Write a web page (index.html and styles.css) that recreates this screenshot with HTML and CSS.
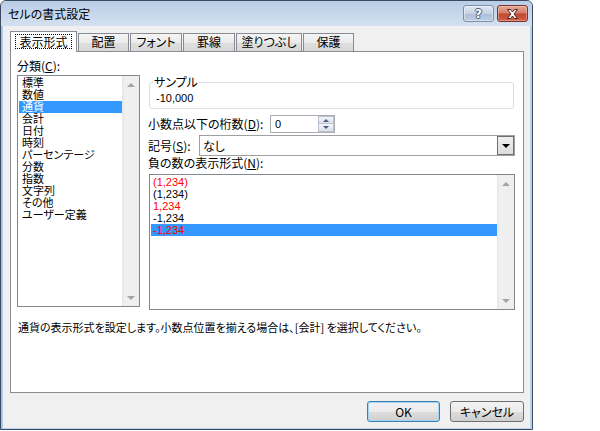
FILE: index.html
```html
<!DOCTYPE html>
<html lang="ja">
<head>
<meta charset="utf-8">
<title>セルの書式設定</title>
<link rel="stylesheet" href="styles.css">
</head>
<body>
<div class="window">
  <div class="titlebar">
    <span class="title">セルの書式設定</span>
    <div class="caption-btns">
      <span class="cbtn help"><span class="q">?</span></span>
      <span class="cbtn close">
        <svg width="13" height="10" viewBox="0 0 13 10"><path d="M1.5 0.5 H4.5 L6.5 3 L8.5 0.5 H11.5 L8 5 L11.5 9.5 H8.5 L6.5 7 L4.5 9.5 H1.5 L5 5 Z" fill="#fff" stroke="#4a2a24" stroke-width="1" stroke-linejoin="round"/></svg>
      </span>
    </div>
  </div>
  <div class="frame">
    <div class="client">
      <div class="tabs">
        <div class="tab active"><span class="focus">表示形式</span></div>
        <div class="tab w51">配置</div>
        <div class="tab w52">フォント</div>
        <div class="tab w52">罫線</div>
        <div class="tab w66">塗りつぶし</div>
        <div class="tab w51">保護</div>
      </div>
      <div class="panel">
        <div class="top">
          <div class="left-col">
            <div class="lbl cat-label">分類(<u>C</u>):</div>
            <div class="listbox cat-list">
              <div class="items">
                <div class="item">標準</div>
                <div class="item">数値</div>
                <div class="item sel">通貨</div>
                <div class="item">会計</div>
                <div class="item">日付</div>
                <div class="item">時刻</div>
                <div class="item">パーセンテージ</div>
                <div class="item">分数</div>
                <div class="item">指数</div>
                <div class="item">文字列</div>
                <div class="item">その他</div>
                <div class="item">ユーザー定義</div>
              </div>
              <div class="scrollbar">
                <span class="sarrow"><span class="tri-up"></span></span>
                <span class="sarrow"><span class="tri-down"></span></span>
              </div>
            </div>
          </div>
          <div class="right-col">
            <div class="group">
              <span class="legend">サンプル</span>
              <div class="sample">-10,000</div>
            </div>
            <div class="row dec-row">
              <span class="lbl dec-label">小数点以下の桁数(<u>D</u>):</span>
              <div class="spin">
                <span class="spin-val">0</span>
                <span class="spin-btns">
                  <span class="sb"><span class="stri-up"></span></span>
                  <span class="sb"><span class="stri-down"></span></span>
                </span>
              </div>
            </div>
            <div class="row sym-row">
              <span class="lbl sym-label">記号(<u>S</u>):</span>
              <div class="combo">
                <span class="combo-val">なし</span>
                <span class="combo-btn"><span class="ctri"></span></span>
              </div>
            </div>
            <div class="lbl neg-label">負の数の表示形式(<u>N</u>):</div>
            <div class="listbox neg-list">
              <div class="items">
                <div class="item red">(1,234)</div>
                <div class="item">(1,234)</div>
                <div class="item red">1,234</div>
                <div class="item">-1,234</div>
                <div class="item sel red">-1,234</div>
              </div>
              <div class="scrollbar">
                <span class="sarrow"><span class="tri-up"></span></span>
                <span class="sarrow"><span class="tri-down"></span></span>
              </div>
            </div>
          </div>
        </div>
        <p class="desc">通貨の表示形式を設定します。小数点位置を揃える場合は、[会計] を選択してください。</p>
      </div>
      <div class="buttons">
        <button class="btn ok">OK</button>
        <button class="btn cancel">キャンセル</button>
      </div>
    </div>
  </div>
</div>
</body>
</html>
```
FILE: styles.css
```css
* { box-sizing: border-box; }
html, body { margin: 0; padding: 0; }
body {
  width: 600px;
  height: 431px;
  overflow: hidden;
  background: #fff;
  font-family: "Noto Sans CJK JP", "Noto Sans", sans-serif;
  font-size: 12px;
  color: #000;
  font-feature-settings: "palt";
}
.window {
  width: 533px;
  height: 430px;
  border: 1px solid #3b4a5c;
  border-radius: 6px 6px 0 0;
  display: flex;
  flex-direction: column;
  background: #a9cbec;
  overflow: hidden;
}
.titlebar {
  height: 25px;
  flex: none;
  display: flex;
  align-items: flex-start;
  padding: 0 4px 0 7px;
  background: linear-gradient(#b8cde7, #d4e1f1);
}
.title {
  line-height: 14px;
  margin-top: 6px;
  font-size: 12px;
  color: #000;
}
.caption-btns {
  margin-left: auto;
  margin-top: 4px;
  display: flex;
  gap: 3px;
}
.cbtn {
  width: 31px;
  height: 17px;
  border-radius: 3px;
  display: flex;
  align-items: center;
  justify-content: center;
}
.help {
  border: 1px solid #7d8ea6;
  background: linear-gradient(#dfe8f3, #c3d2e5 50%, #aebfd8 51%, #bccce2);
  box-shadow: inset 0 0 0 1px rgba(255,255,255,0.45);
}
.q {
  font-family: "DejaVu Sans", sans-serif;
  font-weight: bold;
  font-size: 12px;
  line-height: 12px;
  color: #fff;
  text-shadow: 1px 0 #4d5a6e, -1px 0 #4d5a6e, 0 1px #4d5a6e, 0 -1px #4d5a6e;
}
.close {
  border: 1px solid #7a3328;
  background: linear-gradient(#e6a898, #d57966 48%, #c2482f 52%, #cf5e42);
  box-shadow: inset 0 0 0 1px rgba(255,220,210,0.4);
}
.close svg { display: block; }
.frame {
  flex: 1;
  display: flex;
  padding: 0 2px 1px 2px;
  background: linear-gradient(to right, #8fbde8, #b7d3ee 2px);
}
.client {
  flex: 1;
  display: flex;
  flex-direction: column;
  background: #f0f0f0;
  padding: 5px 6px 6px 7px;
}
.tabs {
  height: 20px;
  flex: none;
  display: flex;
  align-items: flex-end;
}
.tab {
  height: 18px;
  margin-left: 1px;
  border: 1px solid #898c95;
  border-bottom: none;
  background: linear-gradient(#f4f4f4, #ebebeb 50%, #dfdfdf 51%, #d8d8d8);
  text-align: center;
  line-height: 16px;
  white-space: nowrap;
}
.w51 { width: 51px; }
.w52 { width: 52px; }
.w66 { width: 66px; }
.tab.active {
  width: 67px;
  height: 21px;
  margin-left: 0;
  margin-bottom: -1px;
  background: #fff;
  position: relative;
  z-index: 1;
  padding-top: 2px;
}
.focus {
  display: inline-block;
  border: 1px dotted #000;
  padding: 0 3px;
  line-height: 13px;
}
.panel {
  height: 342px;
  flex: none;
  border: 1px solid #898c95;
  background: #fff;
  padding: 0 0 0 6px;
  display: flex;
  flex-direction: column;
}
.top {
  display: flex;
  align-items: flex-start;
}
.left-col { width: 123px; flex: none; }
.lbl { line-height: 14px; white-space: nowrap; }
.cat-label { margin-top: 7px; }
.listbox {
  border: 1px solid #828790;
  background: #fff;
  display: flex;
}
.cat-list { margin-top: 2px; height: 232px; }
.items {
  flex: 1;
  padding-top: 1px;
  min-width: 0;
  font-family: "Liberation Sans", "Noto Sans CJK JP", sans-serif;
  font-size: 11px;
}
.item {
  height: 12px;
  line-height: 12px;
  margin-left: 1px;
  padding-left: 2px;
  white-space: nowrap;
}
.cat-list .item { padding-left: 3px; }
.item.sel { background: #3399ff; color: #fff; }
.item.red { color: #ff0000; }
.scrollbar {
  width: 17px;
  flex: none;
  display: flex;
  flex-direction: column;
  justify-content: space-between;
  background: linear-gradient(to right, #e6e6e6, #f0f0f0 3px, #eeeeee);
}
.sarrow {
  height: 17px;
  display: flex;
  align-items: center;
  justify-content: center;
}
.tri-up {
  width: 0; height: 0;
  border-left: 4px solid transparent;
  border-right: 4px solid transparent;
  border-bottom: 4px solid #a3a3a3;
}
.tri-down {
  width: 0; height: 0;
  border-left: 4px solid transparent;
  border-right: 4px solid transparent;
  border-top: 4px solid #a3a3a3;
}
.right-col { width: 367px; flex: none; margin-left: 8px; }
.group {
  position: relative;
  margin-top: 30px;
  margin-left: 1px;
  width: 365px;
  height: 27px;
  border: 1px solid #d5dfe5;
  border-radius: 3px;
  padding: 9px 0 0 6px;
}
.legend {
  position: absolute;
  top: -7px;
  left: 3px;
  padding: 0 1px;
  background: #fff;
  line-height: 12px;
}
.sample {
  line-height: 12px;
  font-family: "Liberation Sans", "Noto Sans CJK JP", sans-serif;
  font-size: 11px;
}
.row { display: flex; align-items: center; }
.dec-row { margin-top: 6px; height: 18px; }
.dec-label { width: 122px; flex: none; }
.spin {
  width: 65px;
  height: 18px;
  border: 1px solid #abadb3;
  display: flex;
}
.spin-val {
  flex: 1;
  padding-left: 4px;
  line-height: 16px;
  font-family: "Liberation Sans", sans-serif;
  font-size: 11px;
}
.spin-btns { width: 16px; display: flex; flex-direction: column; }
.sb {
  height: 8px;
  display: flex;
  align-items: center;
  justify-content: center;
  border: 1px solid #b9c2d0;
  background: linear-gradient(#f3f5f9, #dbe1ea);
}
.sb + .sb { border-top: none; }
.stri-up {
  width: 0; height: 0;
  border-left: 3px solid transparent;
  border-right: 3px solid transparent;
  border-bottom: 3px solid #4c5f82;
}
.stri-down {
  width: 0; height: 0;
  border-left: 3px solid transparent;
  border-right: 3px solid transparent;
  border-top: 3px solid #4c5f82;
}
.sym-row { margin-top: 2px; height: 21px; }
.sym-label { width: 51px; flex: none; }
.combo {
  width: 316px;
  height: 21px;
  border: 1px solid #a0a0a0;
  display: flex;
  background: #fff;
}
.combo-val { flex: 1; padding-left: 3px; line-height: 19px; }
.combo-btn {
  width: 17px;
  height: 19px;
  border: 1px solid #6f6f6f;
  background: linear-gradient(#f0f0f0, #dcdcdc);
  display: flex;
  align-items: center;
  justify-content: center;
}
.ctri {
  width: 0; height: 0;
  border-left: 4px solid transparent;
  border-right: 4px solid transparent;
  border-top: 4px solid #000;
}
.neg-list {
  margin-top: 4px;
  margin-left: 1px;
  width: 366px;
  height: 136px;
}
.desc {
  margin: 10px 0 0 1px;
  line-height: 14px;
  font-size: 11px;
  white-space: nowrap;
}
.buttons {
  margin-top: 8px;
  display: flex;
  justify-content: flex-end;
  gap: 10px;
}
.btn {
  height: 21px;
  border: 1px solid #707070;
  border-radius: 3px;
  background: linear-gradient(#f2f2f2, #ebebeb 50%, #dddddd 51%, #cfcfcf);
  font-family: inherit;
  font-size: 12px;
  font-feature-settings: "palt";
  line-height: 17px;
  padding: 0;
  color: #000;
}
.ok {
  width: 73px;
  border-color: #3c7fb1;
  box-shadow: inset 0 0 0 1px #9fd5f2;
}
.cancel { width: 74px; }
```
